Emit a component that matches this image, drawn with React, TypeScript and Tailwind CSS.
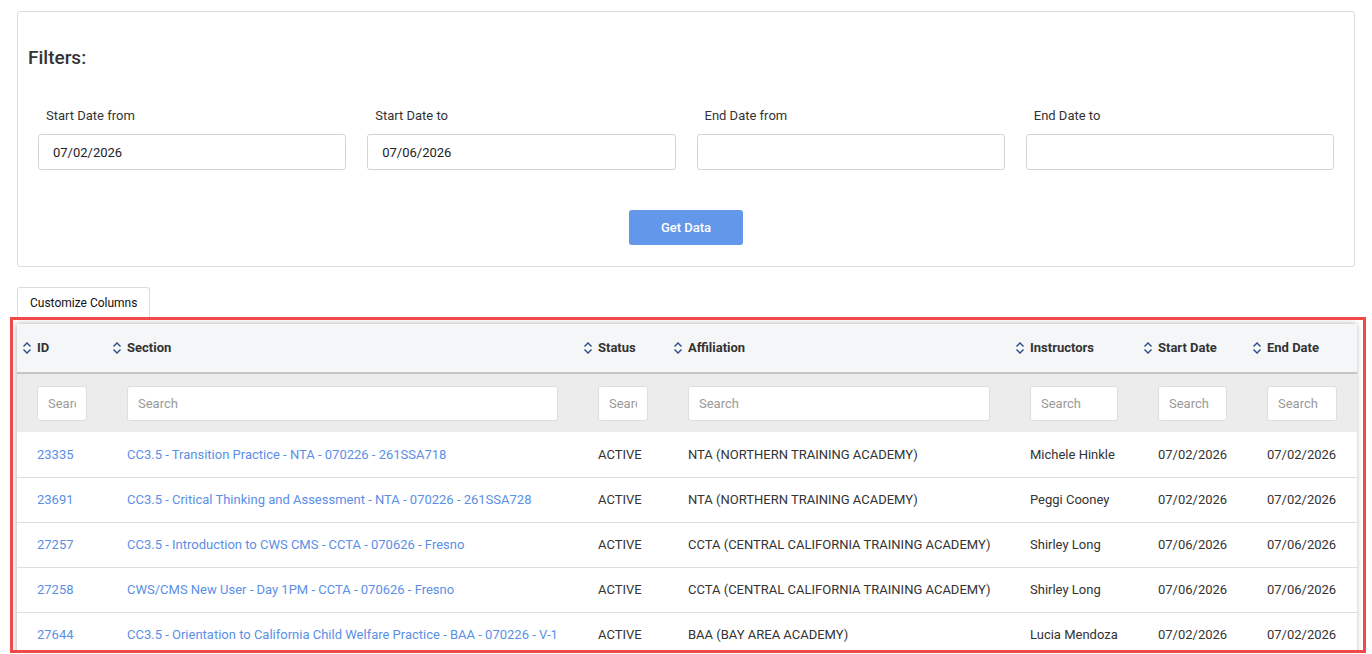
import React from 'react';

const columns = [
  { key: 'id', label: 'ID', width: 'w-[90px]' },
  { key: 'section', label: 'Section', width: 'w-[471px]' },
  { key: 'status', label: 'Status', width: 'w-[90px]' },
  { key: 'affiliation', label: 'Affiliation', width: 'w-[342px]' },
  { key: 'instructors', label: 'Instructors', width: 'w-[128px]' },
  { key: 'start', label: 'Start Date', width: 'w-[109px]' },
  { key: 'end', label: 'End Date', width: 'w-[110px]' },
];

const rows = [
  {
    id: '23335',
    section: 'CC3.5 - Transition Practice - NTA - 070226 - 261SSA718',
    status: 'ACTIVE',
    affiliation: 'NTA (NORTHERN TRAINING ACADEMY)',
    instructors: 'Michele Hinkle',
    start: '07/02/2026',
    end: '07/02/2026',
  },
  {
    id: '23691',
    section: 'CC3.5 - Critical Thinking and Assessment - NTA - 070226 - 261SSA728',
    status: 'ACTIVE',
    affiliation: 'NTA (NORTHERN TRAINING ACADEMY)',
    instructors: 'Peggi Cooney',
    start: '07/02/2026',
    end: '07/02/2026',
  },
  {
    id: '27257',
    section: 'CC3.5 - Introduction to CWS CMS - CCTA - 070626 - Fresno',
    status: 'ACTIVE',
    affiliation: 'CCTA (CENTRAL CALIFORNIA TRAINING ACADEMY)',
    instructors: 'Shirley Long',
    start: '07/06/2026',
    end: '07/06/2026',
  },
  {
    id: '27258',
    section: 'CWS/CMS New User - Day 1PM - CCTA - 070626 - Fresno',
    status: 'ACTIVE',
    affiliation: 'CCTA (CENTRAL CALIFORNIA TRAINING ACADEMY)',
    instructors: 'Shirley Long',
    start: '07/06/2026',
    end: '07/06/2026',
  },
  {
    id: '27644',
    section: 'CC3.5 - Orientation to California Child Welfare Practice - BAA - 070226 - V-1',
    status: 'ACTIVE',
    affiliation: 'BAA (BAY AREA ACADEMY)',
    instructors: 'Lucia Mendoza',
    start: '07/02/2026',
    end: '07/02/2026',
  },
];

const filters = [
  { label: 'Start Date from', value: '07/02/2026' },
  { label: 'Start Date to', value: '07/06/2026' },
  { label: 'End Date from', value: '' },
  { label: 'End Date to', value: '' },
];

function SortIcon() {
  return (
    <svg width="10" height="14" viewBox="0 0 10 14" fill="none" className="shrink-0">
      <path d="M1.5 5.5L5 2L8.5 5.5" stroke="#2b4a86" strokeWidth="1.4" />
      <path d="M1.5 8.5L5 12L8.5 8.5" stroke="#2b4a86" strokeWidth="1.4" />
    </svg>
  );
}

export default function App() {
  return (
    <div className="min-h-screen bg-white px-[17px] pt-[11px] font-['Roboto',sans-serif] text-[13px] text-[#333]">
      {/* Filters */}
      <div className="rounded-[3px] border border-[#dcdcdc] px-[10px] pb-[21px] pt-[33px]">
        <h2 className="text-[19px] font-medium leading-[26px] text-[#333]">Filters:</h2>
        <div className="mx-[10px] mt-[36px] grid grid-cols-4 gap-x-[21px]">
          {filters.map((f) => (
            <div key={f.label}>
              <label className="block pl-[8px] text-[13px] leading-[18px] text-[#333]">{f.label}</label>
              <input
                type="text"
                defaultValue={f.value}
                className="mt-[9px] h-[36px] w-full rounded-[3px] border border-[#d4d4d4] px-[14px] text-[13px] text-[#222] outline-none"
              />
            </div>
          ))}
        </div>
        <div className="mt-[40px] flex justify-center">
          <button className="h-[35px] w-[114px] rounded-[3px] bg-[#6397ea] text-[13px] font-medium text-white">
            Get Data
          </button>
        </div>
      </div>

      {/* Tab */}
      <div className="mt-[20px] flex">
        <div className="flex h-[30px] items-center rounded-t-[3px] border border-b-0 border-[#dcdcdc] px-[12px] text-[12px] text-[#111]">
          Customize Columns
        </div>
      </div>

      {/* Table (annotated) */}
      <div className="-ml-[7px] -mr-[11px] h-[336px] overflow-hidden border-[3px] border-[#f24848] pl-[4px] pr-[7px] pt-[4px]">
        <div className="shadow-[0_0_6px_rgba(0,0,0,0.35)]">
          <table className="w-full table-fixed border-collapse">
            <colgroup>
              {columns.map((c) => (
                <col key={c.key} className={c.width} />
              ))}
            </colgroup>
            <thead>
              <tr className="h-[49px] border-b-2 border-[#c4c4c4] bg-[#f5f6f8]">
                {columns.map((c) => (
                  <th key={c.key} className="pl-[5px] text-left font-bold text-[#333]">
                    <div className="flex items-center gap-[5px]">
                      <SortIcon />
                      <span>{c.label}</span>
                    </div>
                  </th>
                ))}
              </tr>
              <tr className="h-[59px] bg-[#ececec]">
                {columns.map((c) => (
                  <th key={c.key} className="px-[20px] font-normal">
                    <input
                      type="text"
                      placeholder="Search"
                      className="h-[35px] w-full rounded-[3px] border border-[#dedede] bg-white px-[10px] text-[13px] placeholder:text-[#9a9a9a] outline-none"
                    />
                  </th>
                ))}
              </tr>
            </thead>
            <tbody>
              {rows.map((r) => (
                <tr key={r.id} className="h-[45px] border-b border-[#dedede] bg-white">
                  <td className="px-[20px] text-[#5b8fe6]">{r.id}</td>
                  <td className="truncate px-[20px] text-[#5b8fe6]">{r.section}</td>
                  <td className="px-[20px]">{r.status}</td>
                  <td className="whitespace-nowrap px-[20px]">{r.affiliation}</td>
                  <td className="whitespace-nowrap px-[20px]">{r.instructors}</td>
                  <td className="px-[20px]">{r.start}</td>
                  <td className="px-[20px]">{r.end}</td>
                </tr>
              ))}
            </tbody>
          </table>
        </div>
      </div>
    </div>
  );
}
